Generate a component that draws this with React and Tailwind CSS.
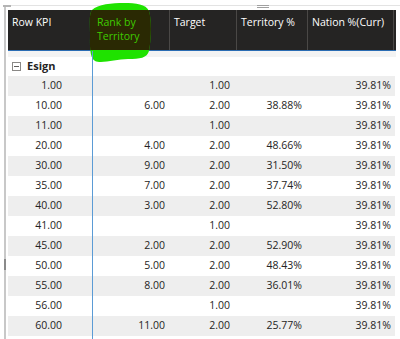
import React from 'react';

// Matrix rows: [row KPI, rank by territory, target, territory %, nation %]
const ROWS = [
  ['1.00', '', '1.00', '', '39.81%'],
  ['10.00', '6.00', '2.00', '38.88%', '39.81%'],
  ['11.00', '', '1.00', '', '39.81%'],
  ['20.00', '4.00', '2.00', '48.66%', '39.81%'],
  ['30.00', '9.00', '2.00', '31.50%', '39.81%'],
  ['35.00', '7.00', '2.00', '37.74%', '39.81%'],
  ['40.00', '3.00', '2.00', '52.80%', '39.81%'],
  ['41.00', '', '1.00', '', '39.81%'],
  ['45.00', '2.00', '2.00', '52.90%', '39.81%'],
  ['50.00', '5.00', '2.00', '48.43%', '39.81%'],
  ['55.00', '8.00', '2.00', '36.01%', '39.81%'],
  ['56.00', '', '1.00', '', '39.81%'],
  ['60.00', '11.00', '2.00', '25.77%', '39.81%'],
];

const COLS = 'grid grid-cols-[84px_77px_67px_71px_86px_3px]';

const BLOB =
  'M4 9 C10 3 24 2 36 2 C48 2 58 3 61 10 C64 20 63 40 61 50 C59 57 52 58 40 58 C28 58 14 63 7 60 C1 56 2 44 2 32 C2 20 1 13 4 9 Z';

// Green highlighter stroke drawn over the Rank header
const Highlight = () => (
  <svg className="absolute left-[88px] top-[1px]" width="66" height="64" viewBox="0 0 66 64">
    <defs>
      <clipPath id="hdr">
        <rect x="0" y="9" width="66" height="40" />
      </clipPath>
    </defs>
    <path d={BLOB} fill="#1fe200" />
    <path d={BLOB} fill="#2a2903" clipPath="url(#hdr)" />
  </svg>
);

const HeaderCell = ({ children, className = '' }) => (
  <div className={`border-l border-[#4a4846] pl-[4px] pt-[5px] leading-[14px] ${className}`}>
    {children}
  </div>
);

const App = () => {
  return (
    <div
      className="relative w-[400px] h-[339px] overflow-hidden bg-white text-[10.5px] text-[#252423]"
      style={{ fontFamily: '"Segoe UI", "Open Sans", "Noto Sans", sans-serif' }}
    >
      <div className="pl-[4px] pt-[5px] h-full">
        <div className="h-full border-l-2 border-t border-l-[#c8c8c8] border-t-[#e3e3e3] pl-[2px] pt-[4px]">
          {/* Header */}
          <div className={`${COLS} w-[388px] h-[41px] bg-[#252423] text-white border-b border-[#2a6cb3]`}>
            <div className="pl-[4px] pt-[5px] leading-[14px]">Row KPI</div>
            <HeaderCell className="relative z-10 text-[#3fcc00] border-transparent">
              Rank by
              <br />
              Territory
            </HeaderCell>
            <HeaderCell>Target</HeaderCell>
            <HeaderCell>Territory %</HeaderCell>
            <HeaderCell>Nation %(Curr)</HeaderCell>
            <div className="border-l border-[#4a4846]" />
          </div>
          <div className="w-[388px] h-[6px] bg-[#f3f3f3]" />

          {/* Group row */}
          <div className="w-[388px] h-[19px] flex items-center gap-[6px] pl-[4px]">
            <span className="w-[9px] h-[9px] border border-[#8a8886] flex items-center justify-center">
              <span className="w-[5px] h-px bg-[#605e5c]" />
            </span>
            <span className="font-bold text-[11px]">Esign</span>
          </div>

          {/* Body rows */}
          {ROWS.map((r, i) => (
            <div
              key={i}
              className={`${COLS} w-[387px] h-[20px] items-center text-right ${i % 2 === 0 ? 'bg-[#eeeeee]' : 'bg-white'}`}
            >
              <div className="pr-[30px]">{r[0]}</div>
              <div className="pr-[4px]">{r[1]}</div>
              <div className="pr-[6px]">{r[2]}</div>
              <div className="pr-[5px]">{r[3]}</div>
              <div className="pr-[2px]">{r[4]}</div>
              <div />
            </div>
          ))}
        </div>
      </div>

      <Highlight />

      {/* Column resize indicator */}
      <div className="absolute left-[92px] top-[51px] bottom-0 w-px bg-[#5b9bd5]" />

      {/* Corner mark and grips */}
      <div className="absolute left-[3px] top-[5px] w-[8px] h-[2px] bg-[#b4b4b4]" />
      <div className="absolute left-[257px] top-[5px] w-[12px] h-[3px] border-y border-[#a0a0a0]" />
      <div className="absolute left-[4px] top-[259px] w-[2px] h-[11px] bg-[#8a8a8a]" />
    </div>
  );
};

export default App;
